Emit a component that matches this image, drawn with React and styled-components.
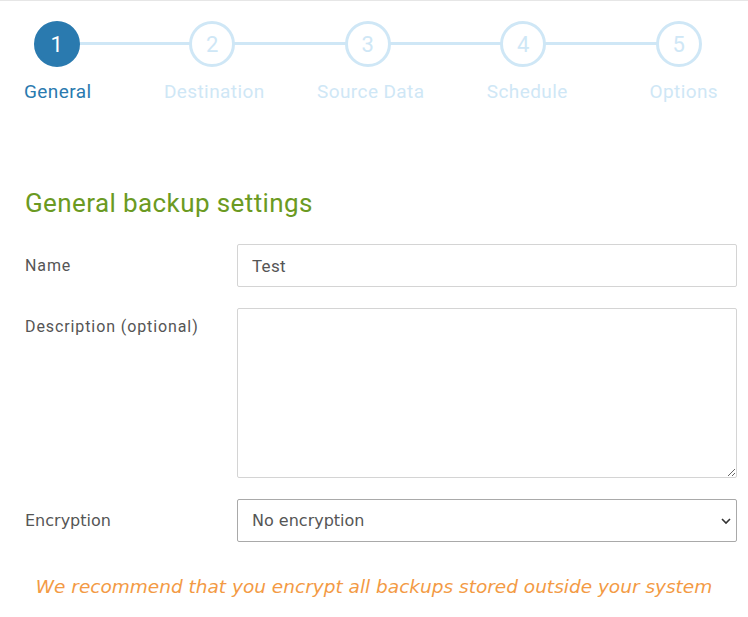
import React, { useState } from "react";
import styled, { createGlobalStyle } from "styled-components";

const GlobalStyle = createGlobalStyle`
  body {
    margin: 0;
    background: #fff;
    font-family: Roboto, "Liberation Sans", sans-serif;
  }
`;

const Page = styled.div`
  width: 748px;
  height: 617px;
  border-top: 1px solid #e6e6e6;
  box-sizing: border-box;
  overflow: hidden;
`;

const Steps = styled.ol`
  display: grid;
  grid-template-columns: repeat(5, 155.5px);
  list-style: none;
  margin: 20px 0 0 -21px;
  padding: 0;
`;

const Step = styled.li`
  position: relative;
  display: flex;
  flex-direction: column;
  align-items: center;

  &:not(:last-child)::after {
    content: "";
    position: absolute;
    left: 50%;
    top: 21px;
    width: 100%;
    height: 3px;
    background: #cfe7f6;
    z-index: 0;
  }
`;

const Circle = styled.div`
  position: relative;
  z-index: 1;
  width: 46px;
  height: 46px;
  box-sizing: border-box;
  border-radius: 50%;
  border: 3px solid ${(p) => (p.$active ? "#2a7aaf" : "#cfe7f6")};
  background: ${(p) => (p.$active ? "#2a7aaf" : "#fff")};
  color: ${(p) => (p.$active ? "#fff" : "#cfe7f6")};
  display: flex;
  align-items: center;
  justify-content: center;
  font-size: 22px;
`;

const StepLabel = styled.span`
  margin-top: 13px;
  padding-left: ${(p) => p.$shift}px;
  font-size: 19px;
  letter-spacing: 0.4px;
  color: ${(p) => (p.$active ? "#2a7aaf" : "#cfe7f6")};
`;

const Form = styled.form`
  padding: 0 11px 0 25px;
`;

const Title = styled.h2`
  margin: 85px 0 26px;
  font-weight: 400;
  font-size: 26px;
  letter-spacing: 0.4px;
  color: #6b9a22;
`;

const Row = styled.div`
  display: grid;
  grid-template-columns: 212px 1fr;
  align-items: ${(p) => (p.$top ? "start" : "center")};
  margin-bottom: 21px;
`;

const Label = styled.label`
  font-size: 16px;
  letter-spacing: ${(p) => (p.$dv ? "0" : "0.9px")};
  color: #555;
  font-family: ${(p) => (p.$dv ? '"DejaVu Sans", sans-serif' : "inherit")};
  padding-top: ${(p) => (p.$top ? "9px" : "0")};
`;

const Input = styled.input`
  height: 43px;
  box-sizing: border-box;
  border: 1px solid #d4d4d4;
  border-radius: 2px;
  padding: 0 14px;
  font: inherit;
  font-size: 17px;
  letter-spacing: 0.3px;
  color: #555;
  outline: none;
`;

const TextArea = styled.textarea`
  height: 170px;
  box-sizing: border-box;
  border: 1px solid #d4d4d4;
  border-radius: 2px;
  font: inherit;
  outline: none;
`;

const SelectWrap = styled.div`
  position: relative;
  display: flex;
`;

const Select = styled.select`
  flex: 1;
  height: 43px;
  box-sizing: border-box;
  border: 1px solid #a9a9a9;
  border-radius: 2px;
  padding: 0 14px;
  background: #fff;
  appearance: none;
  font-family: "DejaVu Sans", sans-serif;
  font-size: 16px;
  color: #555;
  outline: none;
`;

const Chevron = styled.svg`
  position: absolute;
  right: 6px;
  top: 50%;
  transform: translateY(-50%);
  pointer-events: none;
`;

const Warning = styled.p`
  margin: 34px 0 0 -14px;
  text-align: center;
  font-family: "DejaVu Sans", sans-serif;
  font-style: italic;
  font-size: 18.5px;
  color: #f39a44;
`;

const steps = ["General", "Destination", "Source Data", "Schedule", "Options"];

export default function App() {
  const [name, setName] = useState("Test");

  return (
    <Page>
      <GlobalStyle />
      <Steps>
        {steps.map((s, i) => (
          <Step key={s}>
            <Circle $active={i === 0}>{i + 1}</Circle>
            <StepLabel $active={i === 0} $shift={i * 2 + 2}>
              {s}
            </StepLabel>
          </Step>
        ))}
      </Steps>
      <Form>
        <Title>General backup settings</Title>
        <Row>
          <Label>Name</Label>
          <Input value={name} onChange={(e) => setName(e.target.value)} />
        </Row>
        <Row $top>
          <Label $top>Description (optional)</Label>
          <TextArea />
        </Row>
        <Row>
          <Label $dv>Encryption</Label>
          <SelectWrap>
            <Select defaultValue="none">
              <option value="none">No encryption</option>
            </Select>
            <Chevron width="10" height="7" viewBox="0 0 10 7">
              <path d="M1 1.5 L5 5.5 L9 1.5" fill="none" stroke="#333" strokeWidth="1.6" />
            </Chevron>
          </SelectWrap>
        </Row>
        <Warning>We recommend that you encrypt all backups stored outside your system</Warning>
      </Form>
    </Page>
  );
}
